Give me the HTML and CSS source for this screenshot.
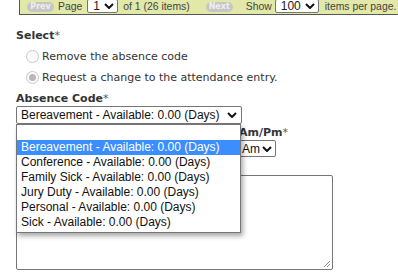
FILE: index.html
```html
<!DOCTYPE html>
<html>
<head>
<meta charset="utf-8">
<link rel="stylesheet" href="styles.css">
</head>
<body>
<div class="page">
  <div class="pager">
    <span class="pbtn prev">Prev</span>
    <span class="ptext t-page">Page</span>
    <span class="psel sel-page">1<svg class="chev" viewBox="0 0 10 6"><path d="M1 1L5 5L9 1"/></svg></span>
    <span class="ptext t-of">of 1 (26 items)</span>
    <span class="pbtn next">Next</span>
    <span class="ptext t-show">Show</span>
    <span class="psel sel-show">100<svg class="chev" viewBox="0 0 10 6"><path d="M1 1L5 5L9 1"/></svg></span>
    <span class="ptext t-items">items per page.</span>
  </div>

  <div class="field">
    <div class="label first">Select<span class="req">*</span></div>
    <div class="radio-row"><span class="radio"></span><span>Remove the absence code</span></div>
    <div class="radio-row"><span class="radio checked"></span><span>Request a change to the attendance entry.</span></div>
  </div>

  <div class="field code-field">
    <div class="label">Absence Code<span class="req">*</span></div>
    <div class="select code-select"><span>Bereavement - Available: 0.00 (Days)</span><svg class="chev" viewBox="0 0 10 6"><path d="M1 1L5 5L9 1"/></svg></div>
    <div class="dropdown">
      <div class="opt"></div>
      <div class="opt active">Bereavement - Available: 0.00 (Days)</div>
      <div class="opt">Conference - Available: 0.00 (Days)</div>
      <div class="opt">Family Sick - Available: 0.00 (Days)</div>
      <div class="opt">Jury Duty - Available: 0.00 (Days)</div>
      <div class="opt">Personal - Available: 0.00 (Days)</div>
      <div class="opt">Sick - Available: 0.00 (Days)</div>
    </div>
  </div>

  <div class="time-row">
    <div class="col col-time">
      <div class="label"></div>
      <div class="select time-input"></div>
    </div>
    <div class="col col-ampm">
      <div class="label">Am/Pm<span class="req">*</span></div>
      <div class="select ampm-select"><span>Am</span><svg class="chev" viewBox="0 0 10 6"><path d="M1 1L5 5L9 1"/></svg></div>
    </div>
  </div>

  <div class="field comments">
    <div class="label"></div>
    <div class="textarea"><svg class="grip" viewBox="0 0 8 8"><path d="M7 1L1 7M7 4L4 7"/></svg></div>
  </div>
</div>
</body>
</html>
```

FILE: styles.css
```css
html, body {
  margin: 0;
  padding: 0;
  background: #fff;
}
body {
  font-family: "DejaVu Sans", Verdana, sans-serif;
  color: #333;
  overflow: hidden;
}
.page {
  padding-left: 16px;
}

/* pager */
.pager {
  margin: -3px 0 0 3px;
  height: 17px;
  border-left: 1px solid #555;
  border-bottom: 1px solid #555;
  background: #e1e8a8;
  display: flex;
  align-items: center;
  font-family: "Liberation Sans", Arial, sans-serif;
  font-size: 10.4px;
  white-space: nowrap;
  color: #444;
  overflow: hidden;
}
.pager > * {
  flex: none;
}
.ptext {
  margin-top: 1px;
}
.pbtn {
  width: 27px;
  height: 10px;
  border-radius: 5px;
  background: #c6c6c6;
  color: #eeeeee;
  font-family: "DejaVu Sans", Verdana, sans-serif;
  font-size: 8px;
  font-weight: bold;
  line-height: 10px;
  text-align: center;
  margin-top: 3px;
}
.prev { margin-left: 7px; }
.t-page { margin-left: 4px; }
.sel-page { margin-left: 5px; width: 31px; }
.t-of { margin-left: 5px; }
.next { margin-left: 16px; }
.t-show { margin-left: 13px; }
.sel-show { margin-left: 3px; width: 44px; }
.t-items { margin-left: 6px; }
.psel {
  box-sizing: border-box;
  height: 14px;
  border: 1px solid #767676;
  border-radius: 2px;
  background: #fff;
  display: flex;
  align-items: center;
  justify-content: space-between;
  padding: 0 3px 0 5px;
  margin-top: 1px;
  font-family: "Liberation Sans", Arial, sans-serif;
  font-size: 12px;
  color: #222;
}

.chev {
  width: 10px;
  height: 6px;
  flex: none;
}
.chev path {
  fill: none;
  stroke: #111;
  stroke-width: 2;
}

/* form */
.label {
  font-size: 11px;
  font-weight: bold;
  line-height: 14px;
  height: 14px;
  color: #333;
  white-space: nowrap;
}
.req {
  font-weight: normal;
  color: #555;
}
.label.first {
  margin-top: 14px;
}
.radio-row {
  display: flex;
  align-items: center;
  height: 21px;
  padding-left: 10px;
  font-size: 11px;
  color: #333;
}
.field > .radio-row:nth-child(2) { margin-top: 3px; }
.radio {
  box-sizing: border-box;
  width: 13px;
  height: 13px;
  border: 1px solid #c9c9c9;
  border-radius: 50%;
  background: #fafafa;
  margin-right: 3px;
  display: flex;
  align-items: center;
  justify-content: center;
}
.radio.checked::after {
  content: "";
  width: 7px;
  height: 7px;
  border-radius: 50%;
  background: #b8b8b8;
}

.code-field {
  position: relative;
  margin-top: 4px;
}
.select {
  box-sizing: border-box;
  border: 1px solid #767676;
  border-radius: 2px;
  background: #fff;
  display: flex;
  align-items: center;
  justify-content: space-between;
  font-family: "Liberation Sans", Arial, sans-serif;
  font-size: 12px;
  color: #111;
  white-space: nowrap;
}
.code-select {
  width: 226px;
  height: 18px;
  padding: 0 4px 0 4px;
}
.dropdown {
  position: absolute;
  top: 100%;
  left: 0;
  width: 225px;
  box-sizing: border-box;
  border: 1px solid #767676;
  background: #fff;
  box-shadow: 2px 3px 5px rgba(0, 0, 0, 0.35);
  padding-bottom: 2px;
  font-family: "Liberation Sans", Arial, sans-serif;
  font-size: 12px;
  color: #111;
  z-index: 10;
}
.opt {
  height: 15px;
  line-height: 15px;
  padding-left: 4px;
  white-space: nowrap;
}
.opt.active {
  background: #3b8eff;
  color: #fff;
}

.time-row {
  display: flex;
  margin-top: 2px;
}
.col-time {
  width: 223px;
}
.time-input {
  width: 200px;
  height: 17px;
}
.ampm-select {
  width: 37px;
  height: 17px;
  padding: 0 3px 0 2px;
}

.comments .label {
  margin-top: 4px;
}
.textarea {
  box-sizing: border-box;
  width: 317px;
  height: 95px;
  border: 1px solid #767676;
  border-radius: 2px;
  background: #fff;
  position: relative;
}
.grip {
  position: absolute;
  right: 1px;
  bottom: 1px;
  width: 8px;
  height: 8px;
}
.grip path {
  stroke: #888;
  stroke-width: 1;
  fill: none;
}
```
